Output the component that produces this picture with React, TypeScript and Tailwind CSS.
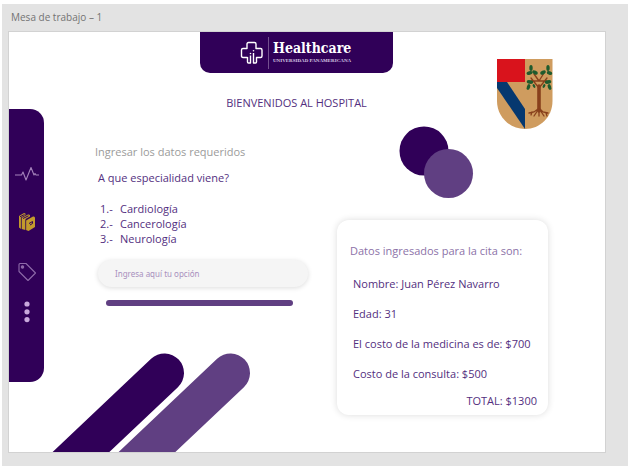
import React from "react";

const specialties = ["Cardiología", "Cancerología", "Neurología"];

const appointment = [
  "Nombre: Juan Pérez Navarro",
  "Edad: 31",
  "El costo de la medicina es de: $700",
  "Costo de la consulta: $500",
];

function PulseIcon() {
  return (
    <svg width="26" height="16" viewBox="0 0 26 16" fill="none" stroke="#a583bb" strokeWidth="1.100" strokeLinejoin="round">
      <path d="M1 9H7.500L9 6L12 14L17 1.500L20 9L21 7.500L22 9H25" />
    </svg>
  );
}

function BooksIcon() {
  return (
    <svg width="18" height="20" viewBox="0 0 18 20" fill="#c39a2c">
      <path d="M1 4L6 1Q8 1 7.500 3L3 5.500V17L1 15.500Z" />
      <path d="M3.500 6L10 2.500Q12.500 2 12 4.500L7.500 7V18L3.500 17Z" />
      <path d="M8 8.500L15 4.500Q17 4 17 6V15L10.500 19L8 18Z" />
      <path d="M2 4.800L6.500 2.500M5 6.500L10.500 3.800M11 11.500L14.500 9.500V11.500L12 13" fill="none" stroke="#300058" strokeWidth="1" />
      <path d="M3.300 6V17M7.800 8V18" stroke="#300058" strokeWidth="0.500" />
    </svg>
  );
}

function TagIcon() {
  return (
    <svg width="20" height="20" viewBox="0 0 20 20" fill="none" stroke="#8d69a8" strokeWidth="1.100" strokeLinejoin="round">
      <path d="M2 2.500Q2 1.500 3 1.500H9L18.500 11L11 18.500L2 9.500Z" />
      <circle cx="5.500" cy="5" r="1.200" fill="#8d69a8" />
    </svg>
  );
}

function DotsIcon() {
  return (
    <svg width="6" height="22" viewBox="0 0 6 22" fill="#c9a9dc">
      <circle cx="3" cy="3" r="2.600" />
      <circle cx="3" cy="10.800" r="2.600" />
      <circle cx="3" cy="18.600" r="2.600" />
    </svg>
  );
}

function CrossLogo() {
  return (
    <svg width="24" height="24" viewBox="0 0 24 24" fill="none" stroke="#fff" strokeWidth="1.400" strokeLinejoin="round">
      <path d="M7.500 16.500H3Q1.500 16.500 1.500 15V9Q1.500 7.500 3 7.500H7V3Q7 1.500 8.500 1.500H14.500Q16 1.500 16 3V7.500H20.500Q22 7.500 22 9V15Q22 16.500 20.500 16.500H16.500V21Q16.500 22 15.500 22H13.500V12" />
      <path d="M7.500 16V21Q7.500 22 8.500 22H10.500V14.500" />
      <circle cx="13.500" cy="9.800" r="0.800" fill="#fff" stroke="none" />
      <circle cx="10.500" cy="12.500" r="0.800" fill="#fff" stroke="none" />
    </svg>
  );
}

function Crest() {
  return (
    <svg width="56" height="70" viewBox="0 0 56 70" role="img" aria-label="Escudo">
      <path d="M0 0H55.500V42C55.500 58 43 70 28 70S0 58 0 42Z" fill="#cf9c5f" />
      <path d="M0 0H28V23H0Z" fill="#d9131c" />
      <path d="M0 23H10L28 50V70L0 29Z" fill="#06386f" />
      <g fill="none" stroke="#88401c" strokeLinecap="round">
        <path d="M42 27V52" strokeWidth="3.600" />
        <path d="M42 29L34 19M42 29L50 19M42 22L37 15M42 22L47 14M34 22H50" strokeWidth="1.300" />
        <path d="M41 50L37 53L32 54M41 51L37 57M42 51V57M43 50L46 53L51 54M43 51L47 57M35 53L34 56M49 54L50 57" strokeWidth="1.300" />
      </g>
      <g fill="#1f5b2d">
        <ellipse cx="34" cy="9" rx="1.700" ry="3" />
        <ellipse cx="38" cy="13.500" rx="3" ry="1.800" transform="rotate(25 38 13.500)" />
        <ellipse cx="32.500" cy="14" rx="3" ry="1.800" transform="rotate(-15 32.500 14)" />
        <ellipse cx="33" cy="23" rx="3.300" ry="1.800" transform="rotate(10 33 23)" />
        <ellipse cx="31.500" cy="28" rx="1.700" ry="3" transform="rotate(20 31.500 28)" />
        <ellipse cx="37" cy="27" rx="1.200" ry="2" transform="rotate(-30 37 27)" />
        <ellipse cx="51" cy="9" rx="1.700" ry="3" />
        <ellipse cx="46" cy="13.500" rx="3" ry="1.800" transform="rotate(-25 46 13.500)" />
        <ellipse cx="52.500" cy="14" rx="2.800" ry="1.800" transform="rotate(15 52.500 14)" />
        <ellipse cx="51" cy="23" rx="3.300" ry="1.800" transform="rotate(-10 51 23)" />
        <ellipse cx="52.500" cy="28" rx="1.700" ry="3" transform="rotate(-20 52.500 28)" />
        <ellipse cx="47" cy="27" rx="1.200" ry="2" transform="rotate(30 47 27)" />
      </g>
    </svg>
  );
}

function SideNav() {
  return (
    <nav className="mt-[77px] flex h-[273px] w-[35px] shrink-0 flex-col items-center self-start rounded-r-[14px] bg-[#300058] pt-[57px]">
      <button aria-label="Signos vitales"><PulseIcon /></button>
      <button aria-label="Expedientes" className="mt-[30px]"><BooksIcon /></button>
      <button aria-label="Etiquetas" className="mt-[30px]"><TagIcon /></button>
      <button aria-label="Más opciones" className="mt-[19px]"><DotsIcon /></button>
    </nav>
  );
}

export default function App() {
  return (
    <div className="bg-white pt-1 pb-[3px] pl-[2px] font-['Open_Sans','Noto_Sans',sans-serif] text-[11px] leading-[15px] text-[#532f80]">
      <div className="bg-[#e3e3e3] pr-[22px] pb-[13px] pl-1.5">
        <div className="h-[27px] pt-1.5 pl-[3px] text-[10px] text-[#737373]">Mesa de trabajo – 1</div>
        <main className="flex overflow-hidden border border-[#d2d2d2] bg-white">
          <SideNav />
          <div className="min-w-0 flex-1">
            <header className="flex h-[97px] pl-[156px]">
              <div className="w-[193px] text-center">
                <div className="flex h-[41px] items-center rounded-b-[10px] bg-[#300058] pl-10 text-left text-white">
                  <CrossLogo />
                  <div className="ml-1 flex h-8 flex-col justify-center border-l border-[#74508f] pl-1">
                    <span className="font-['DejaVu_Serif_Condensed','DejaVu_Serif',serif] text-[14px] leading-4 font-bold">Healthcare</span>
                    <span className="mt-px font-['Liberation_Serif',serif] text-[5px] leading-2 font-bold whitespace-nowrap text-[#d8c8e3]">UNIVERSIDAD PANAMERICANA</span>
                  </div>
                </div>
                <h1 className="mt-[22px] whitespace-nowrap">BIENVENIDOS AL HOSPITAL</h1>
              </div>
              <div className="mt-[27px] ml-[104px]"><Crest /></div>
            </header>
            <div className="flex">
              <section className="flex w-[293px] flex-col">
                <h2 className="mt-[15px] ml-[51px] text-[#9b9b9b]">Ingresar los datos requeridos</h2>
                <label htmlFor="opcion" className="mt-[11px] ml-[54px]">A que especialidad viene?</label>
                <ol className="mt-4 ml-14">
                  {specialties.map((name, i) => (
                    <li key={name} className="flex">
                      <span className="w-5">{i + 1}.-</span>
                      {name}
                    </li>
                  ))}
                </ol>
                <input
                  id="opcion"
                  placeholder="Ingresa aquí tu opción"
                  className="mt-[14px] ml-[54px] h-[27px] w-[210px] rounded-[14px] bg-[#f5f5f5] px-[17px] font-['Noto_Sans',sans-serif] text-[8px] shadow-[0_1px_5px_rgba(0,0,0,0.14)] outline-none placeholder:text-[#a890bd]"
                />
                <div className="mt-[13px] ml-[62px] h-[6px] w-[187px] rounded-full bg-[#603f82]" />
                <svg className="mt-[47px] ml-[7px]" width="200" height="99" viewBox="51 353 200 99" fill="none" strokeWidth="39" strokeLinecap="round" aria-hidden="true">
                  <path d="M164.500 373L44 487" stroke="#300058" />
                  <path d="M230.500 373L110 487" stroke="#603f82" />
                </svg>
              </section>
              <section className="flex-1">
                <svg className="-mt-1 ml-[62px]" width="76" height="76" viewBox="0 0 76 76" aria-hidden="true">
                  <circle cx="25" cy="26" r="24.500" fill="#300058" />
                  <circle cx="49.500" cy="48.500" r="24.500" fill="#603f82" />
                </svg>
                <article className="mt-[19px] w-[211px] rounded-xl bg-white pt-[23px] pr-[11px] pb-[7px] pl-[13px] shadow-[0_0_7px_rgba(0,0,0,0.14)]">
                  <h2 className="whitespace-nowrap text-[#8c72a8]">Datos ingresados para la cita son:</h2>
                  <div className="mt-[18px] ml-[3px] flex flex-col gap-[15px] whitespace-nowrap">
                    {appointment.map((line) => <p key={line}>{line}</p>)}
                  </div>
                  <p className="mt-3 text-right">TOTAL: $1300</p>
                </article>
              </section>
            </div>
          </div>
        </main>
      </div>
    </div>
  );
}
